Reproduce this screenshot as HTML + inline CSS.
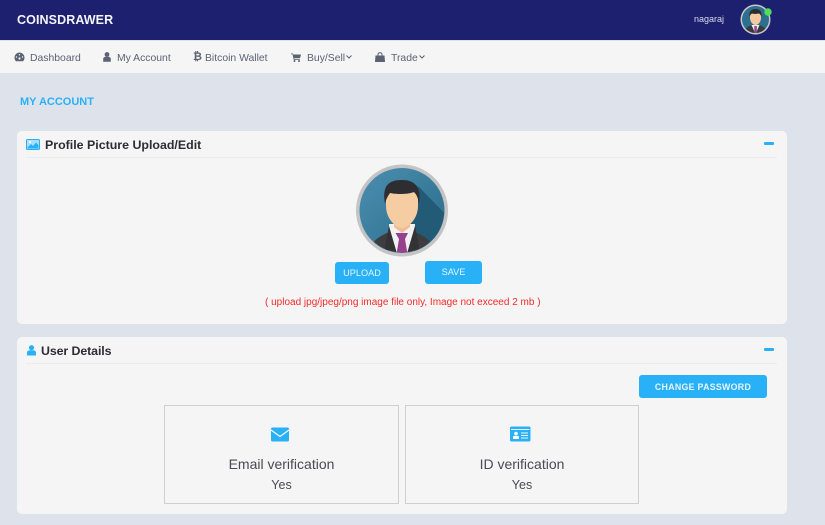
<!DOCTYPE html>
<html><head><meta charset="utf-8"><style>
html,body{margin:0;padding:0}
body{width:825px;height:525px;overflow:hidden;background:#dee3eb;position:relative;font-family:"Liberation Sans",sans-serif}
.a{position:absolute;white-space:nowrap}
.nav{font-size:10.4px;color:#5b6273;top:51px;line-height:13px;padding-top:.5px}
.card{position:absolute;left:17px;width:770px;background:#f5f5f5;border-radius:5px}
.hr{position:absolute;height:1px;left:26px;width:751px;background:#ececec}
.h{font-weight:bold;font-size:12.4px;color:#2c2c34;line-height:16px}
.btn{position:absolute;background:#29b1f8;color:#e6f5fd;border-radius:3px;text-align:center;font-size:9.200px}
.box{position:absolute;top:405px;height:97px;border:1px solid #cfcfcf;text-align:center;color:#4a4a50}
.box .t{position:absolute;left:0;right:0;top:49px;font-size:14px;line-height:18px}
.box .y{position:absolute;left:0;right:0;top:71px;font-size:12.5px;line-height:16px}
svg{position:absolute;display:block}
</style></head><body>
<div class="a" style="left:0;top:0;width:825px;height:40px;background:#1d206e"></div>
<div class="a" style="left:0;top:41px;width:825px;height:32px;background:#f5f5f5"></div>
<div class="a" style="left:17px;top:12px;font-size:12.5px;font-weight:bold;color:#f4f4fa;line-height:16px;letter-spacing:.1px">COINSDRAWER</div>
<div class="a" style="left:694px;top:13px;font-size:9px;color:#d8d9ee;line-height:12px">nagaraj</div>

<svg style="left:740px;top:4px" width="34" height="32" viewBox="0 0 34 32">
<defs><clipPath id="c1"><circle cx="15.500" cy="15.500" r="13.500"/></clipPath></defs>
<circle cx="15.500" cy="15.500" r="15" fill="#c8c8c8"/>
<circle cx="15.500" cy="15.500" r="13.500" fill="#2c6f8e"/>
<g clip-path="url(#c1)">
<path d="M3 31 C4 24 9 22 12 21 H19 C22 22 27 24 28 31Z" fill="#3a3a3d"/>
<path d="M11.500 21 L15.500 30 L19.500 21Z" fill="#eee"/>
<rect x="14.300" y="22" width="2.500" height="9" fill="#96408f"/>
<path d="M10 11 C10 8 21 8 21 11 V14 C21 18 18 21 15.500 21 C13 21 10 18 10 14Z" fill="#f4c9a0"/>
<path d="M9.700 13 C8.500 7 12 5 15.500 5 C19 5 22.500 7 21.300 13 C21 11 20 10 19 9.500 C17 10 13 10 12 9.500 C11 10 10 11 9.700 13Z" fill="#2b2b2f"/>
</g>
<circle cx="28" cy="8" r="3.700" fill="#4fe05a"/>
</svg>

<!-- nav icons -->
<svg style="left:14px;top:52px" width="11" height="10" viewBox="0 0 11 10"><path d="M5.500 0.500A5 5 0 0 0 .5 5.500C.5 7 1 8.300 2 9.300H9C10 8.300 10.500 7 10.500 5.500A5 5 0 0 0 5.500 .5Z" fill="#5b6273"/><circle cx="5.500" cy="6.500" r="1.100" fill="#f5f5f5"/><circle cx="2.500" cy="5" r=".7" fill="#f5f5f5"/><circle cx="8.500" cy="5" r=".7" fill="#f5f5f5"/><circle cx="5.500" cy="2.800" r=".7" fill="#f5f5f5"/></svg>
<div class="a nav" style="left:30px">Dashboard</div>
<svg style="left:103px;top:52px" width="8" height="10" viewBox="0 0 8 10"><circle cx="4" cy="2.500" r="2.400" fill="#5b6273"/><path d="M.2 9.700V7C.2 5.500 1.500 5 2.500 4.800H5.500C6.500 5 7.800 5.500 7.800 7V9.700Z" fill="#5b6273"/></svg>
<div class="a nav" style="left:117px">My Account</div>
<div class="a" style="left:193px;top:51px;font-size:11px;font-weight:bold;color:#5b6273;line-height:13px">&#8383;</div>
<div class="a nav" style="left:205px">Bitcoin Wallet</div>
<svg style="left:291px;top:53px" width="10" height="9" viewBox="0 0 10 9"><path d="M0 .5H2L2.400 1.500H10L9 5.200H3.200L3.500 6.300H8.800V7H2.800L1.500 1.200H0Z" fill="#5b6273"/><circle cx="3.500" cy="8" r="1" fill="#5b6273"/><circle cx="8" cy="8" r="1" fill="#5b6273"/></svg>
<div class="a nav" style="left:307px">Buy/Sell</div>
<svg style="left:346px;top:55px" width="6" height="4" viewBox="0 0 6 4"><path d="M.5 .5L3 3L5.500 .5" fill="none" stroke="#5b6273"/></svg>
<svg style="left:375px;top:52px" width="10" height="10" viewBox="0 0 10 10"><path d="M.5 3.500H9.500L10 10H0Z" fill="#5b6273"/><path d="M3 4V2.500C3 .2 7 .2 7 2.500V4" fill="none" stroke="#5b6273"/></svg>
<div class="a nav" style="left:391px">Trade</div>
<svg style="left:419px;top:55px" width="6" height="4" viewBox="0 0 6 4"><path d="M.5 .5L3 3L5.500 .5" fill="none" stroke="#5b6273"/></svg>

<div class="a" style="left:20px;top:95px;font-size:11px;font-weight:bold;color:#29b1f8;line-height:14px">MY ACCOUNT</div>

<!-- card 1 -->
<div class="card" style="top:131px;height:193px"></div>
<div class="hr" style="top:157px"></div>
<svg style="left:26px;top:139px" width="14" height="11" viewBox="0 0 14 11"><rect x=".5" y=".5" width="13" height="10" rx="1" fill="#a9defc" stroke="#29b1f8"/><path d="M1.500 8.500L5 5L7 7L10 3.500L12.500 6V9.500H1.500Z" fill="#29b1f8"/><circle cx="4" cy="3.200" r="1.200" fill="#fff"/></svg>
<div class="a h" style="left:45px;top:136.500px">Profile Picture Upload/Edit</div>
<div class="a" style="left:764px;top:142px;width:10px;height:3px;background:#29b1f8;border-radius:1px"></div>

<svg style="left:356px;top:164px" width="92" height="93" viewBox="0 0 92 93">
<defs><clipPath id="c2"><circle cx="46" cy="46.500" r="42"/></clipPath>
<linearGradient id="g" x1="0" y1="0" x2="1" y2="1"><stop offset="0" stop-color="#4b8fb0"/><stop offset="1" stop-color="#2a6a88"/></linearGradient></defs>
<circle cx="46" cy="46.500" r="46" fill="#c4c4c4"/>
<circle cx="46" cy="46.500" r="42.500" fill="url(#g)"/>
<g clip-path="url(#c2)">
<path d="M62 22 L95 56 V95 H45Z" fill="#235a75"/>
<path d="M12 93 C13 78 22 73 33 68 H59 C70 73 79 78 80 93Z" fill="#3d3d40"/>
<path d="M33 60 H59 L58 93 H34Z" fill="#f2f2f2"/>
<path d="M27 93 L33 62 L42 93Z" fill="#333336"/>
<path d="M65 93 L59 62 L50 93Z" fill="#333336"/>
<path d="M39.500 69 H52 L49 75 L52 93 H40 L43 75Z" fill="#96408f"/>
<path d="M38 54 H54 V63 L46 69 L38 63Z" fill="#eebd92"/>
<path d="M30 33 C30 24 62 24 62 33 V42 C62 55 52 64 46 64 C40 64 30 55 30 42Z" fill="#f6cca3"/>
<path d="M29 40 C26 22 32 16 46 16 C58 16 66 22 63 40 C62 33 60 30 58 28 C50 31 38 30 34 29 C32 32 30 35 29 40Z" fill="#2e2e32"/>
</g></svg>

<div class="btn" style="left:335px;top:262px;width:54px;height:22px;line-height:23px">UPLOAD</div>
<div class="btn" style="left:425px;top:261px;width:57px;height:23px;line-height:23px">SAVE</div>
<div class="a" style="left:265px;top:296px;font-size:10px;color:#f32a2a;line-height:13px">( upload jpg/jpeg/png image file only, Image not exceed 2 mb )</div>

<!-- card 2 -->
<div class="card" style="top:337px;height:177px"></div>
<div class="hr" style="top:363px"></div>
<svg style="left:27px;top:345px" width="9" height="11" viewBox="0 0 9 11"><circle cx="4.500" cy="2.700" r="2.600" fill="#29b1f8"/><path d="M0 10.500V7.500C0 6 1.500 5.300 2.500 5.200H6.500C7.500 5.300 9 6 9 7.500V10.500Z" fill="#29b1f8"/></svg>
<div class="a h" style="left:41px;top:343px;letter-spacing:-.1px">User Details</div>
<div class="a" style="left:764px;top:348px;width:10px;height:3px;background:#29b1f8;border-radius:1px"></div>
<div class="btn" style="left:639px;top:375px;width:128px;height:23px;line-height:24px;font-weight:bold;font-size:8.800px;letter-spacing:.3px">CHANGE PASSWORD</div>

<div class="box" style="left:164px;width:233px">
<svg style="left:106px;top:21px" width="18" height="15" viewBox="0 0 18 15"><rect x="0" y=".5" width="18" height="14" rx="1.500" fill="#29b1f8"/><path d="M0 3L9 9.500L18 3" fill="none" stroke="#f5f5f5" stroke-width="1.300"/></svg>
<div class="t">Email verification</div><div class="y">Yes</div>
</div>
<div class="box" style="left:405px;width:232px">
<svg style="left:104px;top:20px" width="21" height="16" viewBox="0 0 21 16"><rect y=".5" width="20.500" height="15" rx="1.500" fill="#29b1f8"/><rect x="1" y="3" width="18.500" height="1" fill="#e8f6fe"/><circle cx="6" cy="7.500" r="1.800" fill="#fff"/><path d="M3 13V11C3 10 4.500 9.800 6 9.800S9 10 9 11V13Z" fill="#fff"/><path d="M11 7H18M11 9.500H18M11 12H18" stroke="#e8f6fe"/></svg>
<div class="t">ID verification</div><div class="y">Yes</div>
</div>
</body></html>
